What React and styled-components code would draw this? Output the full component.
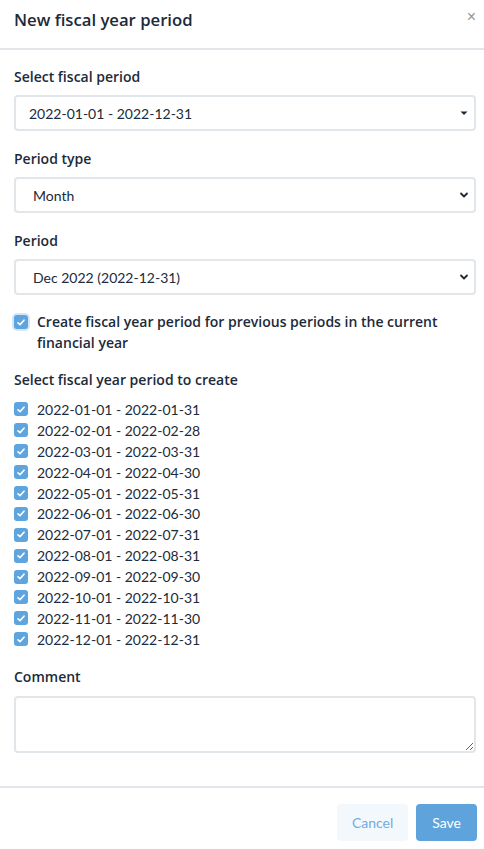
import React from 'react';
import styled, { createGlobalStyle } from 'styled-components';

const GlobalStyle = createGlobalStyle`
  html, body {
    margin: 0;
    padding: 0;
    background: #fff;
  }
  body {
    font-family: Lato, "Noto Sans", sans-serif;
    color: #1c2a39;
  }
  * { box-sizing: border-box; }
`;

const Modal = styled.div`
  width: 484px;
  min-height: 849px;
  display: flex;
  flex-direction: column;
  background: #fff;
`;

const Header = styled.div`
  height: 50px;
  display: flex;
  align-items: center;
  justify-content: space-between;
  padding: 0 8px 10px 14px;
  border-bottom: 2px solid #e2e6ea;
`;

const Title = styled.h1`
  margin: 0;
  font-family: "Open Sans", Lato, sans-serif;
  font-size: 16.7px;
  font-weight: 600;
  color: #1c2a39;
`;

const Close = styled.button`
  border: 0;
  background: none;
  padding: 0;
  color: #8e969f;
  font-size: 16px;
  line-height: 1;
  cursor: pointer;
  margin-top: -4px;
`;

const Body = styled.div`
  padding: 17px 8px 0 14px;
  display: flex;
  flex-direction: column;
`;

const Label = styled.div`
  font-family: "Open Sans", Lato, sans-serif;
  font-size: 14px;
  font-weight: 600;
  line-height: 20px;
  margin-bottom: ${p => p.gap || 8}px;
`;

const Field = styled.div`
  margin-bottom: 18px;
`;

const SelectWrap = styled.div`
  position: relative;
  height: 36px;
`;

const Select = styled.select`
  width: 100%;
  height: 100%;
  appearance: none;
  border: 2px solid #e0e6ea;
  border-radius: 4px;
  background: #fff;
  padding: 0 30px 0 ${p => p.pad || 13}px;
  font-family: Lato, "Noto Sans", sans-serif;
  font-size: 14px;
  color: #1c2a39;
  outline: none;
`;

const Caret = styled.span`
  position: absolute;
  right: 5px;
  top: 50%;
  transform: translateY(-50%);
  display: flex;
  pointer-events: none;
`;

const Box = styled.span`
  width: 14px;
  height: 14px;
  border-radius: 3px;
  background: #5ea4de;
  display: inline-flex;
  align-items: center;
  justify-content: center;
  flex-shrink: 0;
  box-shadow: ${p => (p.focus ? '0 0 0 2px #d4e6f7' : 'none')};
`;

const CheckRow = styled.label`
  display: flex;
  align-items: flex-start;
  gap: 9px;
  font-family: "Open Sans", Lato, sans-serif;
  font-size: 14px;
  font-weight: 600;
  line-height: 21px;
  margin-top: -2px;
  margin-bottom: 17px;
  padding-right: 14px;
  & > span:first-child { margin-top: 4px; }
`;

const List = styled.div`
  display: flex;
  flex-direction: column;
  margin-bottom: 17px;
`;

const Item = styled.label`
  display: flex;
  align-items: center;
  gap: 9px;
  height: 20.9px;
  font-size: 14px;
  color: #1c2a39;
`;

const TextArea = styled.textarea`
  display: block;
  width: 100%;
  height: 57px;
  border: 2px solid #e0e6ea;
  border-radius: 4px;
  resize: vertical;
  font-family: Lato, "Noto Sans", sans-serif;
  font-size: 14px;
  outline: none;
`;

const Footer = styled.div`
  margin-top: 33px;
  border-top: 2px solid #e2e6ea;
  display: flex;
  justify-content: flex-end;
  gap: 8px;
  padding: 16px 7px 0 0;
`;

const Button = styled.button`
  height: 37px;
  padding: 0 ${p => (p.primary ? 16 : 15)}px;
  border: 0;
  border-radius: 4px;
  font-family: Lato, "Noto Sans", sans-serif;
  font-size: 14px;
  background: ${p => (p.primary ? '#5fa3dc' : '#f3f8fd')};
  color: ${p => (p.primary ? '#fff' : '#74abdc')};
  cursor: pointer;
`;

const Tick = () => (
  <svg width="8" height="7" viewBox="0 0 8 7">
    <path d="M1 3.8 L3 5.6 L7 1.2" fill="none" stroke="#fff" strokeWidth="1.6" strokeLinecap="round" strokeLinejoin="round" />
  </svg>
);

const Triangle = () => (
  <svg width="14" height="14" viewBox="0 0 14 14">
    <path d="M3.5 5.5 H10.5 L7 9 Z" fill="#1c2a39" />
  </svg>
);

const Chevron = () => (
  <svg width="14" height="14" viewBox="0 0 14 14">
    <path d="M4 5.5 L7 8.5 L10 5.5" fill="none" stroke="#1c2a39" strokeWidth="1.8" strokeLinecap="round" strokeLinejoin="round" />
  </svg>
);

const periods = [
  ['01-01', '01-31'],
  ['02-01', '02-28'],
  ['03-01', '03-31'],
  ['04-01', '04-30'],
  ['05-01', '05-31'],
  ['06-01', '06-30'],
  ['07-01', '07-31'],
  ['08-01', '08-31'],
  ['09-01', '09-30'],
  ['10-01', '10-31'],
  ['11-01', '11-30'],
  ['12-01', '12-31']
];

const App = () => (
  <Modal>
    <GlobalStyle />
    <Header>
      <Title>New fiscal year period</Title>
      <Close>×</Close>
    </Header>
    <Body>
      <Field>
        <Label>Select fiscal period</Label>
        <SelectWrap>
          <Select pad={13}>
            <option>2022-01-01 - 2022-12-31</option>
          </Select>
          <Caret><Triangle /></Caret>
        </SelectWrap>
      </Field>
      <Field>
        <Label>Period type</Label>
        <SelectWrap>
          <Select pad={17}>
            <option>Month</option>
          </Select>
          <Caret><Chevron /></Caret>
        </SelectWrap>
      </Field>
      <Field>
        <Label>Period</Label>
        <SelectWrap>
          <Select pad={17}>
            <option>Dec 2022 (2022-12-31)</option>
          </Select>
          <Caret><Chevron /></Caret>
        </SelectWrap>
      </Field>
      <CheckRow>
        <Box focus><Tick /></Box>
        <span>Create fiscal year period for previous periods in the current financial year</span>
      </CheckRow>
      <Label gap={9}>Select fiscal year period to create</Label>
      <List>
        {periods.map(([from, to]) => (
          <Item key={from}>
            <Box><Tick /></Box>
            2022-{from} - 2022-{to}
          </Item>
        ))}
      </List>
      <Label gap={9}>Comment</Label>
      <TextArea />
    </Body>
    <Footer>
      <Button>Cancel</Button>
      <Button primary>Save</Button>
    </Footer>
  </Modal>
);

export default App;
